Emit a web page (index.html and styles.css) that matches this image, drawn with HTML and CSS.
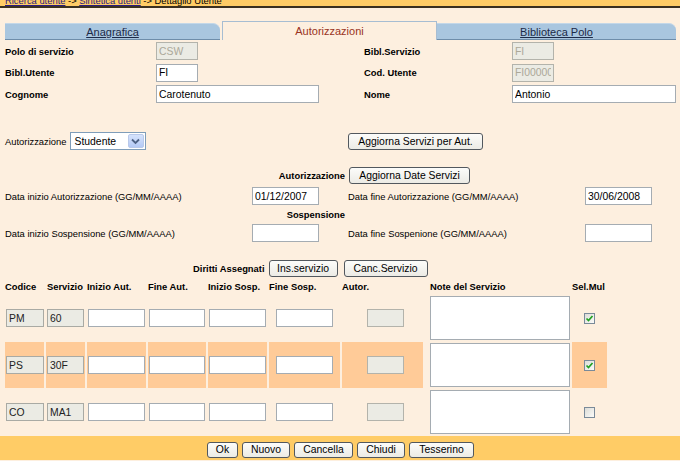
FILE: index.html
```html
<!DOCTYPE html>
<html lang="it">
<head>
<meta charset="utf-8">
<title>Dettaglio Utente</title>
<link rel="stylesheet" href="styles.css">
</head>
<body>
<div class="topbar">
  <div class="crumbs"><a href="#">Ricerca utente</a> -&gt; <a href="#">Sintetica utenti</a> -&gt; Dettaglio Utente</div>
</div>

<div class="tabs">
  <div class="tab tab-a"><a href="#">Anagrafica</a></div>
  <div class="tab tab-active">Autorizzazioni</div>
  <div class="tab tab-c"><a href="#">Biblioteca Polo</a></div>
</div>

<div class="anag">
  <span class="lbl b">Polo di servizio</span>
  <span><input class="in dis w41" value="CSW" disabled></span>
  <span class="lbl b">Bibl.Servizio</span>
  <span><input class="in dis w41" value="FI" disabled></span>

  <span class="lbl b">Bibl.Utente</span>
  <span><input class="in w41" value="FI"></span>
  <span class="lbl b">Cod. Utente</span>
  <span><input class="in dis w41" value="FI000000" disabled></span>

  <span class="lbl b">Cognome</span>
  <span><input class="in w162" value="Carotenuto"></span>
  <span class="lbl b">Nome</span>
  <span><input class="in w163" value="Antonio"></span>
</div>

<div class="auth">
  <div class="row row-a">
    <div class="cell-left">
      <span class="lbl">Autorizzazione</span>
      <div class="select">
        <span class="select-text">Studente</span>
        <span class="select-btn"><svg width="9" height="7" viewBox="0 0 9 7"><path d="M1 1.5 L4.5 5 L8 1.5" fill="none" stroke="#4d6185" stroke-width="1.8"/></svg></span>
      </div>
    </div>
    <div class="cell-right"><button class="btn w134">Aggiorna Servizi per Aut.</button></div>
  </div>

  <div class="row row-b">
    <div class="cell-left right"><span class="lbl b">Autorizzazione</span></div>
    <div class="cell-right"><button class="btn w121">Aggiorna Date Servizi</button></div>
  </div>

  <div class="dates">
    <span class="lbl">Data inizio Autorizzazione (GG/MM/AAAA)</span>
    <span><input class="in w67" value="01/12/2007"></span>
    <span class="lbl">Data fine Autorizzazione (GG/MM/AAAA)</span>
    <span><input class="in w67" value="30/06/2008"></span>
  </div>

  <div class="row row-d">
    <div class="cell-left right"><span class="lbl b">Sospensione</span></div>
  </div>

  <div class="dates">
    <span class="lbl">Data inizio Sospensione (GG/MM/AAAA)</span>
    <span><input class="in w67" value=""></span>
    <span class="lbl">Data fine Sospenione (GG/MM/AAAA)</span>
    <span><input class="in w67" value=""></span>
  </div>
</div>

<div class="diritti">
  <span class="lbl b">Diritti Assegnati</span>
  <button class="btn w68">Ins.servizio</button>
  <button class="btn w83">Canc.Servizio</button>
</div>

<table class="grid">
  <colgroup>
    <col class="k1"><col class="k2"><col class="k3"><col class="k4"><col class="k5"><col class="k6"><col class="k7"><col class="k8"><col class="k9">
  </colgroup>
  <thead>
    <tr>
      <th>Codice</th><th>Servizio</th><th>Inizio Aut.</th><th>Fine Aut.</th><th>Inizio Sosp.</th><th>Fine Sosp.</th><th>Autor.</th><th class="th-note">Note del Servizio</th><th class="th-sel">Sel.Mul</th>
    </tr>
  </thead>
  <tbody>
    <tr>
      <td><input class="in ro c1" value="PM" readonly></td>
      <td><input class="in ro c2" value="60" readonly></td>
      <td><input class="in c3"></td>
      <td><input class="in c4"></td>
      <td><input class="in c5"></td>
      <td><input class="in c6"></td>
      <td><input class="in dis c7" disabled></td>
      <td class="note"><textarea class="ta"></textarea></td>
      <td><span class="chk"><svg width="11" height="11" viewBox="0 0 11 11"><path d="M2.5 5.5 L4.5 7.5 L8.5 3" fill="none" stroke="#21a121" stroke-width="1.7"/></svg></span></td>
    </tr>
    <tr class="hl">
      <td><input class="in ro c1" value="PS" readonly></td>
      <td><input class="in ro c2" value="30F" readonly></td>
      <td><input class="in c3"></td>
      <td><input class="in c4"></td>
      <td><input class="in c5"></td>
      <td><input class="in c6"></td>
      <td><input class="in dis c7" disabled></td>
      <td class="note"><textarea class="ta"></textarea></td>
      <td><span class="chk"><svg width="11" height="11" viewBox="0 0 11 11"><path d="M2.5 5.5 L4.5 7.5 L8.5 3" fill="none" stroke="#21a121" stroke-width="1.7"/></svg></span></td>
    </tr>
    <tr>
      <td><input class="in ro c1" value="CO" readonly></td>
      <td><input class="in ro c2" value="MA1" readonly></td>
      <td><input class="in c3"></td>
      <td><input class="in c4"></td>
      <td><input class="in c5"></td>
      <td><input class="in c6"></td>
      <td><input class="in dis c7" disabled></td>
      <td class="note"><textarea class="ta"></textarea></td>
      <td><span class="chk"></span></td>
    </tr>
  </tbody>
</table>

<div class="footer">
  <button class="btn w30">Ok</button>
  <button class="btn w47">Nuovo</button>
  <button class="btn w58">Cancella</button>
  <button class="btn w47">Chiudi</button>
  <button class="btn w64">Tesserino</button>
</div>
</body>
</html>
```

FILE: styles.css
```css
* { box-sizing: border-box; }
html, body { margin: 0; padding: 0; }
body {
  width: 680px;
  height: 461px;
  overflow: hidden;
  background: #fdefdf;
  font-family: "Liberation Sans", Arial, sans-serif;
  font-size: 9.4px;
  color: #000;
}

/* top breadcrumb bar */
.topbar {
  height: 8px;
  background: #ffcc66;
  border-bottom: 2px solid #3a3020;
  overflow: hidden;
}
.crumbs {
  margin-top: -4px;
  padding-left: 5px;
  line-height: 10px;
  font-size: 9.4px;
  color: #000;
}
.crumbs a { color: #2a1a80; text-decoration: underline; }

/* tabs */
.tabs {
  display: flex;
  margin: 13px 0 0 5px;
  height: 19px;
  align-items: flex-end;
}
.tab {
  height: 17px;
  font-size: 11px;
  line-height: 17px;
  text-align: center;
}
.tab a { color: #1c2a48; text-decoration: underline; }
.tab-a {
  width: 215px;
  background: #a9c6df;
  border-top: 1px solid #c3d7e8;
  border-bottom: 1px solid #6e8daa;
  border-top-right-radius: 7px;
  margin-right: 2px;
}
.tab-active {
  width: 215px;
  height: 19px;
  line-height: 19px;
  background: #fdefdf;
  border: 1px solid #a7bdd2;
  border-bottom: none;
  color: #993322;
}
.tab-c {
  width: 239px;
  background: #a9c6df;
  border-top: 1px solid #c3d7e8;
  border-bottom: 1px solid #6e8daa;
  border-top-right-radius: 7px;
}

/* anagrafica grid */
.anag {
  display: grid;
  grid-template-columns: 151px 208px 148px 1fr;
  grid-auto-rows: 18px;
  row-gap: 3.5px;
  padding-left: 5px;
  margin-top: 2px;
}
.anag > span { display: flex; align-items: center; }

.lbl { font-size: 9.4px; white-space: nowrap; }
.b { font-weight: bold; }

/* inputs */
.in {
  height: 18px;
  border: 1px solid #a5acb2;
  background: #fff;
  font-family: "Liberation Sans", Arial, sans-serif;
  font-size: 10.4px;
  color: #000;
  padding: 0 2px;
  margin: 0;
  outline: none;
}
.in.dis {
  background: #ebebe4;
  color: #aca899;
  border-color: #b3b3ab;
}
.in.ro {
  background: #ebebe4;
  color: #222;
  border-color: #a9aaa4;
}
.w41 { width: 42px; }
.w162 { width: 163px; }
.w163 { width: 164px; }
.w67 { width: 67px; }

/* buttons */
.btn {
  height: 17px;
  padding: 0;
  border: 1px solid #52585e;
  border-radius: 3px;
  background: linear-gradient(#fcfcfa, #ecebe5);
  font-family: "Liberation Sans", Arial, sans-serif;
  font-size: 10.4px;
  color: #000;
  text-align: center;
  line-height: 15px;
}
.w134 { width: 135px; }
.w121 { width: 121px; }
.w68 { width: 69px; }
.w83 { width: 84px; }
.w30 { width: 31px; }
.w47 { width: 48px; }
.w58 { width: 59px; }
.w64 { width: 65px; }

/* authorisation section */
.auth { padding-left: 5px; margin-top: 29px; }
.row {
  display: grid;
  grid-template-columns: 343px 1fr;
  align-items: center;
}
.row-a { height: 18px; }
.row-b { height: 17px; margin-top: 17px; }
.row-d { height: 19px; }
.cell-left { display: flex; align-items: center; gap: 3px; }
.cell-left.right { justify-content: flex-end; padding-right: 3px; }
.row-b .cell-right { padding-left: 1px; }

.select {
  width: 76px;
  height: 18px;
  border: 1px solid #7f9db9;
  background: #fff;
  display: flex;
  align-items: center;
  justify-content: space-between;
  padding: 0 1px 0 4px;
  font-size: 10.4px;
}
.select-btn {
  width: 16px;
  height: 14px;
  background: linear-gradient(#d6e3fc, #b4c9f5);
  border: 1px solid #b9c9ea;
  border-radius: 2px;
  display: flex;
  align-items: center;
  justify-content: center;
}

.dates {
  display: grid;
  grid-template-columns: 247px 96px 237px 1fr;
  height: 18px;
  margin-top: 3px;
  align-items: center;
}
.row-d + .dates { margin-top: 0; }
.dates > span { display: flex; align-items: center; }

/* diritti */
.diritti {
  display: flex;
  align-items: center;
  height: 17px;
  margin: 18px 0 0 193px;
}
.diritti .btn:first-of-type { margin-left: 4px; }
.diritti .btn + .btn { margin-left: 6px; }

/* services table */
.grid {
  border-collapse: separate;
  border-spacing: 2px 1px;
  table-layout: fixed;
  width: 604px;
  margin-left: 3px;
}
.k1 { width: 39px; } .k2 { width: 39px; } .k3 { width: 59px; }
.k4 { width: 58px; } .k5 { width: 59px; } .k6 { width: 71px; }
.k7 { width: 81px; } .k8 { width: 145px; } .k9 { width: 35px; }
.grid th {
  height: 16px;
  padding: 0;
  text-align: left;
  font-size: 9.4px;
  font-weight: bold;
  white-space: nowrap;
}
.grid th:nth-child(2) { padding-left: 1px; }
.th-note { padding-left: 5px !important; }
.grid td {
  height: 46px;
  padding: 0;
  vertical-align: middle;
}
.grid tr.hl td { background: #ffcb98; }
.grid tr.hl td.note { background: transparent; }
.grid td .in { display: block; }
.c1 { width: 38px; margin-left: 1px !important; }
.c2 { width: 37px; margin-left: 1px !important; }
.c3 { width: 57px; margin-left: 1px !important; }
.c4 { width: 56px; margin-left: 1px !important; }
.c5 { width: 57px; margin-left: 1px !important; }
.c6 { width: 57px; margin-left: 7px !important; }
.c7 { width: 37px; margin-left: 25px !important; }
.ta {
  display: block;
  width: 140px;
  height: 44px;
  margin-left: 5px;
  border: 1px solid #a5acb2;
  background: #fff;
  resize: none;
  padding: 0;
}
.chk {
  display: block;
  width: 11px;
  height: 11px;
  margin-left: 12px;
  border: 1px solid #7a8a99;
  background: linear-gradient(135deg, #dcdcd7, #fbfbf9);
  position: relative;
}
.chk svg { position: absolute; left: -1px; top: -1px; }

/* footer */
.footer {
  height: 24px;
  background: #ffcc66;
  display: flex;
  justify-content: center;
  align-items: flex-start;
  gap: 4px;
  padding-top: 6px;
  padding-left: 1px;
}
.footer .btn { height: 16px; line-height: 14px; }
```
